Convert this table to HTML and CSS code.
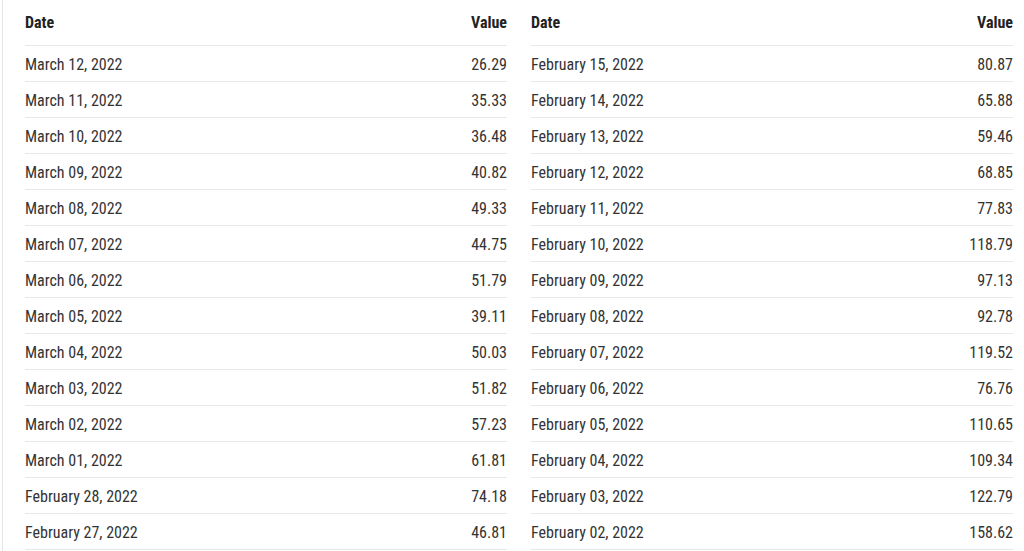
FILE: index.html
```html
<!DOCTYPE html>
<html>
<head>
<meta charset="utf-8">
<link rel="stylesheet" href="styles.css">
</head>
<body>
<div class="page">
  <div class="tables">
    <table class="data">
      <thead><tr><th class="date">Date</th><th class="val">Value</th></tr></thead>
      <tbody>
        <tr><td class="date">March 12, 2022</td><td class="val">26.29</td></tr>
        <tr><td class="date">March 11, 2022</td><td class="val">35.33</td></tr>
        <tr><td class="date">March 10, 2022</td><td class="val">36.48</td></tr>
        <tr><td class="date">March 09, 2022</td><td class="val">40.82</td></tr>
        <tr><td class="date">March 08, 2022</td><td class="val">49.33</td></tr>
        <tr><td class="date">March 07, 2022</td><td class="val">44.75</td></tr>
        <tr><td class="date">March 06, 2022</td><td class="val">51.79</td></tr>
        <tr><td class="date">March 05, 2022</td><td class="val">39.11</td></tr>
        <tr><td class="date">March 04, 2022</td><td class="val">50.03</td></tr>
        <tr><td class="date">March 03, 2022</td><td class="val">51.82</td></tr>
        <tr><td class="date">March 02, 2022</td><td class="val">57.23</td></tr>
        <tr><td class="date">March 01, 2022</td><td class="val">61.81</td></tr>
        <tr><td class="date">February 28, 2022</td><td class="val">74.18</td></tr>
        <tr><td class="date">February 27, 2022</td><td class="val">46.81</td></tr>
      </tbody>
    </table>
    <table class="data">
      <thead><tr><th class="date">Date</th><th class="val">Value</th></tr></thead>
      <tbody>
        <tr><td class="date">February 15, 2022</td><td class="val">80.87</td></tr>
        <tr><td class="date">February 14, 2022</td><td class="val">65.88</td></tr>
        <tr><td class="date">February 13, 2022</td><td class="val">59.46</td></tr>
        <tr><td class="date">February 12, 2022</td><td class="val">68.85</td></tr>
        <tr><td class="date">February 11, 2022</td><td class="val">77.83</td></tr>
        <tr><td class="date">February 10, 2022</td><td class="val">118.79</td></tr>
        <tr><td class="date">February 09, 2022</td><td class="val">97.13</td></tr>
        <tr><td class="date">February 08, 2022</td><td class="val">92.78</td></tr>
        <tr><td class="date">February 07, 2022</td><td class="val">119.52</td></tr>
        <tr><td class="date">February 06, 2022</td><td class="val">76.76</td></tr>
        <tr><td class="date">February 05, 2022</td><td class="val">110.65</td></tr>
        <tr><td class="date">February 04, 2022</td><td class="val">109.34</td></tr>
        <tr><td class="date">February 03, 2022</td><td class="val">122.79</td></tr>
        <tr><td class="date">February 02, 2022</td><td class="val">158.62</td></tr>
      </tbody>
    </table>
  </div>
</div>
</body>
</html>
```
FILE: styles.css
```css
html, body {
  margin: 0;
  padding: 0;
  background: #fff;
}
.page {
  margin-left: 2px;
  border-left: 1px solid #e4e4e4;
  height: 551px;
  overflow: hidden;
  padding-left: 22px;
  padding-right: 11px;
  font-family: Roboto, "Liberation Sans", sans-serif;
  font-stretch: condensed;
  font-size: 16px;
  line-height: 20px;
  color: #333;
}
.tables {
  display: flex;
  gap: 24px;
}
.data {
  flex: 1;
  border-collapse: collapse;
  width: 482px;
}
.data th {
  height: 44px;
  padding: 1px 0 0 0;
  font-weight: 700;
  color: #222;
  border-bottom: 1px solid #e8e8e8;
  vertical-align: middle;
}
.data td {
  height: 33px;
  padding: 2px 0 0 0;
  border-bottom: 1px solid #e8e8e8;
  vertical-align: middle;
}
.date { text-align: left; }
.val { text-align: right; }
```
